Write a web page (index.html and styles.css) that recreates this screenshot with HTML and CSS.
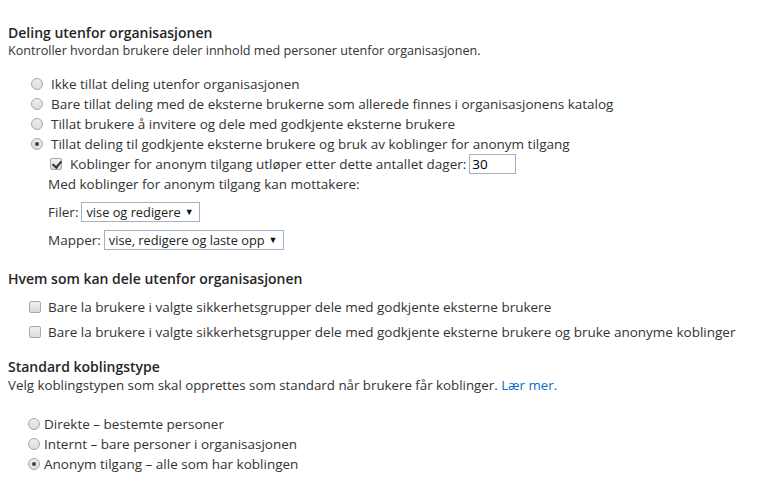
FILE: index.html
```html
<!DOCTYPE html>
<html>
<head>
<meta charset="utf-8">
<link rel="stylesheet" href="styles.css">
</head>
<body>
<section class="sec sec1">
  <h3 class="title">Deling utenfor organisasjonen</h3>
  <p class="desc narrow">Kontroller hvordan brukere deler innhold med personer utenfor organisasjonen.</p>
  <ul class="opts">
    <li class="row"><span class="radio"></span><span>Ikke tillat deling utenfor organisasjonen</span></li>
    <li class="row"><span class="radio"></span><span>Bare tillat deling med de eksterne brukerne som allerede finnes i organisasjonens katalog</span></li>
    <li class="row"><span class="radio"></span><span>Tillat brukere å invitere og dele med godkjente eksterne brukere</span></li>
    <li class="row"><span class="radio on"></span><span>Tillat deling til godkjente eksterne brukere og bruk av koblinger for anonym tilgang</span></li>
  </ul>
  <div class="sub">
    <div class="row exp"><span class="check on"></span><span>Koblinger for anonym tilgang utløper etter dette antallet dager:</span><span class="num">30</span></div>
    <div class="row recv">Med koblinger for anonym tilgang kan mottakere:</div>
    <div class="selrow s1"><span>Filer:</span><span class="select"><span>vise og redigere</span><i class="arr">▼</i></span></div>
    <div class="selrow s2"><span>Mapper:</span><span class="select"><span>vise, redigere og laste opp</span><i class="arr">▼</i></span></div>
  </div>
</section>
<section class="sec sec2">
  <h3 class="title">Hvem som kan dele utenfor organisasjonen</h3>
  <ul class="cbs">
    <li class="cbrow"><span class="check"></span><span>Bare la brukere i valgte sikkerhetsgrupper dele med godkjente eksterne brukere</span></li>
    <li class="cbrow"><span class="check"></span><span>Bare la brukere i valgte sikkerhetsgrupper dele med godkjente eksterne brukere og bruke anonyme koblinger</span></li>
  </ul>
</section>
<section class="sec sec3">
  <h3 class="title">Standard koblingstype</h3>
  <p class="desc">Velg koblingstypen som skal opprettes som standard når brukere får koblinger. <a class="link">Lær mer.</a></p>
  <ul class="opts2">
    <li class="row"><span class="radio"></span><span>Direkte – bestemte personer</span></li>
    <li class="row"><span class="radio"></span><span>Internt – bare personer i organisasjonen</span></li>
    <li class="row"><span class="radio on"></span><span>Anonym tilgang – alle som har koblingen</span></li>
  </ul>
</section>
</body>
</html>
```
FILE: styles.css
```css
* { box-sizing: border-box; }
html, body { background: #fff; }
body {
  margin: 0;
  padding: 24px 8px 0 8px;
  font-family: "Open Sans", "Noto Sans", sans-serif;
  font-size: 13.5px;
  color: #333;
  line-height: 18px;
}
.sec { margin: 0; }
.title { margin: 0; font-size: 14px; font-weight: 600; line-height: 18px; color: #262626; }
.desc { margin: 0; line-height: 18px; font-size: 13.3px; }
.desc.narrow { font-size: 12.6px; }
ul { list-style: none; margin: 0; padding: 0; }
.opts { margin-top: 14px; padding-left: 23px; }
.row { display: flex; align-items: center; height: 20px; white-space: nowrap; }
.radio {
  width: 12px; height: 12px; border-radius: 50%;
  border: 1px solid #a8a8a8;
  background: linear-gradient(#ededed, #dcdcdc);
  margin-right: 8px; flex: none; position: relative;
}
.radio.on::after {
  content: ""; position: absolute; left: 3px; top: 3px; width: 4px; height: 4px;
  border-radius: 50%; background: #444;
}
.check {
  width: 12px; height: 12px; border: 1px solid #a8a8a8; border-radius: 2px;
  background: linear-gradient(#f0f0f0, #dadada); flex: none; margin-right: 8px; position: relative;
}
.check.on::after {
  content: ""; position: absolute; left: 3px; top: 0px; width: 4px; height: 7px;
  border: solid #333; border-width: 0 2px 2px 0; transform: rotate(40deg);
}
.sub { padding-left: 40px; }
.exp { padding-left: 2px; }
.num {
  display: inline-block; width: 47px; height: 20px; border: 1px solid #9fb2c8;
  margin-left: 3px; padding-left: 2px; color: #000; line-height: 18px;
}
.recv { height: 20px; }
.selrow { display: flex; align-items: center; margin-top: 8px; height: 20px; white-space: nowrap; }
.select {
  display: inline-flex; align-items: center; height: 20px; border: 1px solid #9fb2c8;
  margin-left: 3px; padding: 0 6px 0 4px; color: #222; font-size: 12.8px; white-space: nowrap;
}
.s1 .select { width: 119px; }
.s2 .select { width: 180px; }
.arr { font-style: normal; font-size: 9px; margin-left: auto; padding-left: 4px; color: #111; }
.sec2 { margin-top: 20px; }
.cbs { padding-left: 21px; margin-top: 6px; }
.cbrow { display: flex; align-items: center; height: 25px; white-space: nowrap; }
.cbs .check { margin-right: 7px; }
.sec3 { margin-top: 14px; }
.link { color: #0f6cbd; }
.opts2 { margin-top: 20px; padding-left: 20px; }
.opts2 .radio { margin-right: 4px; }
```
